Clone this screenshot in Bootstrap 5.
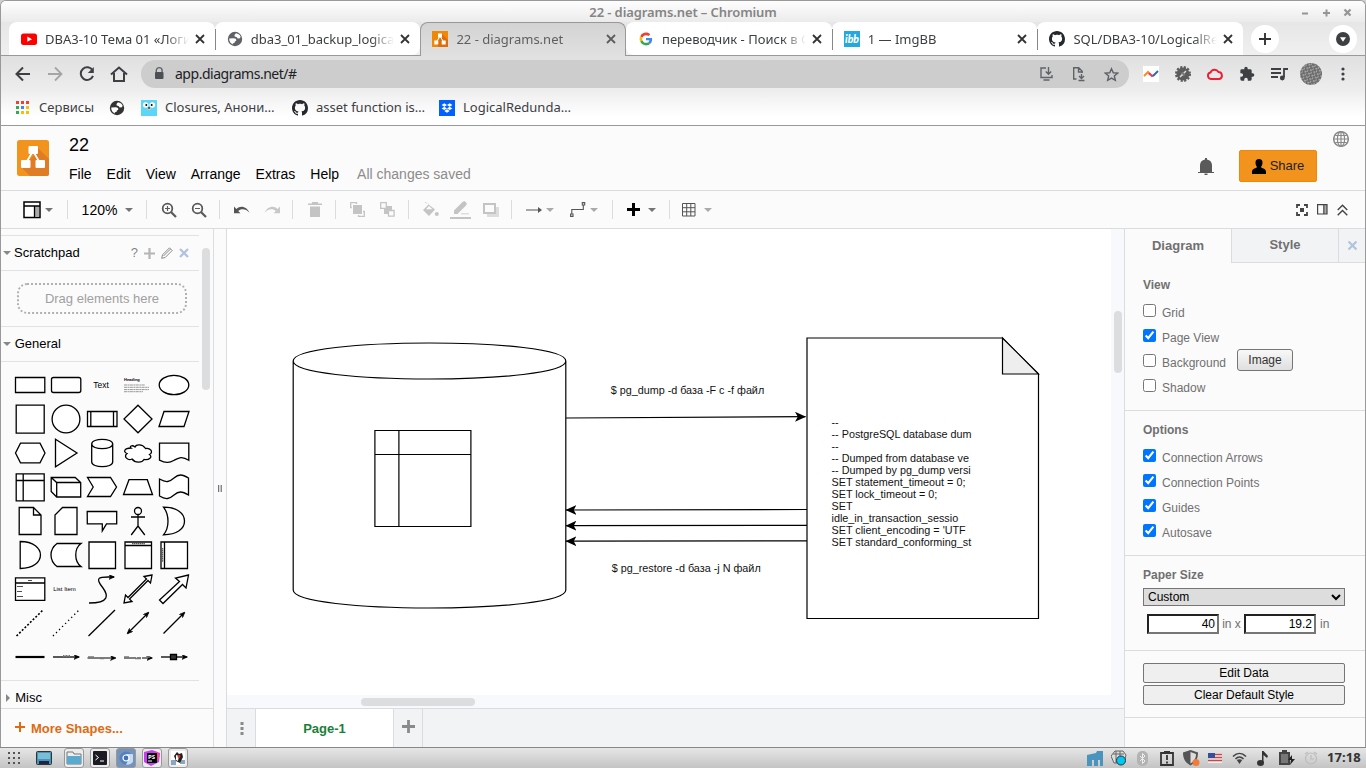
<!DOCTYPE html>
<html lang="ru">
<head>
<meta charset="utf-8">
<title>22 - diagrams.net</title>
<link rel="stylesheet" href="https://cdn.jsdelivr.net/npm/bootstrap@5.3.0/dist/css/bootstrap.min.css">
<style>
*{box-sizing:border-box}
body{width:1366px;height:768px;overflow:hidden;background:#cfcfcf;color:#000;font-family:"Liberation Sans",Arial,sans-serif;font-size:13px;line-height:1.2}
svg{display:block;flex:none}
.win{height:747px;border:1px solid #999;border-width:1px 1px 0;border-radius:6px 6px 0 0;overflow:hidden;background:#fbfbfb}
.ui{font-family:"Noto Sans","Open Sans",sans-serif;font-size:13px;color:#3c4043}
.titlebar{height:21px;background:linear-gradient(#fefefe,#ebebeb);color:#858585;font-weight:600;font-size:13px;padding-top:4px;letter-spacing:-.1px}
.winbtns{right:10px;top:5px;gap:5px}
.tabstrip{height:34px;background:linear-gradient(#e6e6e6,#f0f0f0);padding-left:8px;border-bottom:1px solid #999}
.btab{width:205.7px;height:33px;background:#fff;padding:1px 7px 0 12px;border-radius:8px 8px 0 0;position:relative}
.btab+.btab.sep::before{content:"";position:absolute;left:0;top:7px;height:21px;width:1px;background:#888}
.btab .ttl{flex:1 1 0;min-width:0;margin-left:8px;line-height:20px;-webkit-mask-image:linear-gradient(90deg,#000 82%,transparent 98%)}
.btab.on{height:34px;background:linear-gradient(#d3d3d3,#e0e0e0);border:1px solid #999;border-bottom:0;color:#5f5f5f;padding:0 6px 1px 11px}
.btab.bl{border-bottom-right-radius:8px}.btab.br{border-bottom-left-radius:8px}
.round{width:28px;height:28px;border-radius:50%;background:#fff;display:grid;place-items:center}
.navrow{height:36px;background:linear-gradient(#e0e0e0,#eeeeee)}
.nb{width:32px;display:grid;place-items:center}
.navl{padding-left:6px;margin-right:6px}
.exts{padding-left:6px}
.omni{width:988px;height:28px;border-radius:14px;background:#cdcdcd;font-size:14px;letter-spacing:-.48px;color:#202124;padding-right:2px}
.marks{height:34px;background:linear-gradient(#efefef,#fff 75%);border-bottom:1px solid #999;padding-left:14px;padding-bottom:2px}
.bm{gap:8px}
.bm1{width:94px}.bm2{width:32px}.bm3{width:151px}.bm4{width:147px}
.apphead{height:65px;border-bottom:1px solid #dadce0;padding-left:16px}
.applogo{margin-top:14px}
.headtxt{margin-left:20px;padding-top:9px}
.docname{font-size:18px;line-height:20px}
.menus{font-size:14px;line-height:16px;margin-top:11px}
.menus span{margin-right:15px}
.menus .saved{color:#8c8c8c;margin:0 0 0 3px}
.share{background:#f2931e;border:1px solid #f08705;border-radius:2px;width:78px;height:32px;font-size:13px;color:#222;margin-top:24px}
.bell{margin:32px 25px 0 0}.lang{margin:5px 16px 0 16px}
.tools{height:38px;border-bottom:1px solid #dadce0}
.tg{height:19px;border-right:1px solid #dadce0;display:flex;align-items:center;justify-content:center}
.g66{width:67px;padding-left:8px}.g78{width:79px;padding-left:1px}.g72{width:73px;padding-left:1px}.g42{width:43px;padding-left:2px}.g102{width:103px;padding-left:1px}.g100{width:101px}.g56{width:57px;padding-left:1px}.g52{width:53px;border:0}
.ic{width:30px;display:grid;place-items:center}
.caret{width:0;height:0;border:4.5px solid transparent;border-top-color:#747474;border-bottom:0}
.caret.lt{border-top-color:#aaa}
.toolr{gap:9px;padding-right:17px}
.work{height:518px}
.side{width:213px;border-right:1px solid #dadce0}
.sidein{width:198px;height:479px;padding-top:6px}
.sec{border-top:1px solid #e2e2e2;height:35px}
.tri{width:0;height:0;border:4.5px solid transparent;border-top-color:#888;border-bottom:0;margin:0 3px 0 2px}
.tri.shut{border:4.5px solid transparent;border-left-color:#888;border-right:0;margin:0 5px 0 4.5px}
.sicons{gap:6px;padding-right:10px}
.dragbox{border:2px dotted #b0b0b0;border-radius:10px;height:31px;width:170px;margin:12px 0 0 16px;color:#a0a0a0;text-align:center;line-height:27px}
.palette{width:181px;padding-top:6px;margin-left:10.5px;height:318px;font-size:0;align-content:flex-start}
.palette svg{fill:#fff;stroke:#000;stroke-width:1.3;width:36px;height:34px}
.more{height:39px;border-top:1px solid #dadce0;color:#e06a10;font-weight:700;padding:1px 0 0 14px}
.thumb{background:#dcdddf;border-radius:4px}
.sthumb{width:8px;height:142px;margin:19px 0 0 3px}
.vthumb{width:8px;height:62px;margin:82px 0 0 3px}
.hbar{height:13px;padding-top:3px}.hthumb{width:114px;height:8px;margin-left:134px}
.split{width:13px;border-right:1px solid #dadce0}
.mid{width:897px;background:#f8f9fc}
.canvas{background:#fff}
.pages{height:39px;background:#f1f3f4;border-top:1px solid #dadce0}
.pagetab{width:139px;background:#fff;border:solid #dadce0;border-width:0 1px;color:#188038;font-weight:700;padding-top:1px}
.pmenu{width:28px;padding:1px 0 0 1px}.padd{width:29px;border-right:1px solid #dadce0;padding-top:11px}
.panel{border-left:1px solid #dadce0;width:241px;font-size:12px;color:#707070}
.ptab{height:34px;font-size:13px;font-weight:700;display:grid;place-items:center}
.pt1{width:106px}.pt2{width:107px;padding-bottom:1px}
.off{background:#f1f3f4;border:1px solid #dadce0;border-width:0 0 1px 1px}
.blk{border-bottom:1px solid #dadce0;padding:12px 19px 0 18px}
.bk1{height:148px;padding-top:15px}.bk2{height:145px}.bk3{height:95px}.bk4{height:67px}
.blk h6{font-size:12px;font-weight:700;margin:0;line-height:14px}
.lst{padding-top:12px}
.opt{height:25px;line-height:14px}
.opt input{margin:0 6px 0 0;width:13px;height:13px}
.opt span{padding-top:2px}
.imgbtn{border:1px solid #767676;border-radius:3px;background:linear-gradient(#f8f8f8,#dfdfdf);width:56px;height:22px;margin:-5px 0 0 11px;padding:0;color:#333;line-height:19px}
.wide{width:202px;height:20px;border:1px solid #767676;border-radius:2px;background:#efefef;color:#000;padding:0;line-height:17px;display:block;margin-bottom:2px}
.paper{width:202px;height:18px;border:1px solid #767676;background:#ddd;font-size:12px;display:block;border-radius:0;color:#000;padding:0;margin:6px 0 8px}
.num{width:72px;height:20px;font-size:12px;text-align:right;border:2px inset #767676;padding:1px 2px;border-radius:0}
.inx{width:25px;text-align:center}
.taskbar{height:21px;background:linear-gradient(#e6e6e6,#c4c4c4);border-top:1px solid #888;color:#333}
.app{width:26px;height:20px;display:grid;place-items:center}
.app.first{width:28px}.app.second{width:32px}
.app.run{width:20px;margin:0 3px;border:1px solid #999;border-radius:3px;background:#ececec}
.app.cur{background:#7393bb}
.tray{width:24px;display:grid;place-items:center}
.clock{font-size:13px;font-weight:700;width:43px;letter-spacing:.1px}
</style>
</head>
<body>
<svg width="0" height="0" class="position-absolute">
<defs>
<symbol id="x" viewBox="0 0 16 16"><path d="M4 4l8 8M12 4l-8 8" stroke="#333" stroke-width="1.8"/></symbol>
<symbol id="gh" viewBox="0 0 16 16"><path fill="#24292e" d="M8 0C3.58 0 0 3.58 0 8c0 3.54 2.29 6.53 5.47 7.59.4.07.55-.17.55-.38 0-.19-.01-.82-.01-1.49-2.01.37-2.53-.49-2.69-.94-.09-.23-.48-.94-.82-1.13-.28-.15-.68-.52-.01-.53.63-.01 1.08.58 1.23.82.72 1.21 1.87.87 2.33.66.07-.52.28-.87.51-1.07-1.78-.2-3.64-.89-3.64-3.95 0-.87.31-1.59.82-2.15-.08-.2-.36-1.02.08-2.12 0 0 .67-.21 2.2.82.64-.18 1.32-.27 2-.27s1.36.09 2 .27c1.53-1.04 2.2-.82 2.2-.82.44 1.1.16 1.92.08 2.12.51.56.82 1.27.82 2.15 0 3.07-1.87 3.75-3.65 3.95.29.25.54.73.54 1.48 0 1.07-.01 1.93-.01 2.2 0 .21.15.46.55.38A8.01 8.01 0 0 0 16 8c0-4.42-3.58-8-8-8z"/></symbol>
<symbol id="globe" viewBox="0 0 16 16"><circle cx="8" cy="8" r="7.200" fill="currentColor"/><path fill="#fff" d="M2.200 7.500L7 7.200c1.300.3 2 .7 2.300 1.600.1 1-.5 1.500-1.500 1.600l-.3 1.600-1.700.2.1 1.300C3.600 12.600 2.100 10.300 2.200 7.500zM9 2.200c2 .3 3.800 1.500 4.600 3.300L13 7.300l-2.300.3L9.500 6 7.700 5.600 7.500 4z"/></symbol>
<symbol id="dio" viewBox="0 0 16 16"><path fill="#f08705" d="M0 0h16v16H0z"/><path fill="#df6c0c" d="M9 2l7 7v7H7l-4-4 5-4z"/><path d="M8 5L4.500 11M8 5l3.500 6" stroke="#fff"/><path fill="#fff" d="M6 2.500h4v4H6zM2.300 9.500h4v4h-4zM9.700 9.500h4v4h-4z"/></symbol>
<marker id="ar" viewBox="0 0 11 10" refX="10.500" refY="5" markerWidth="11" markerHeight="10" markerUnits="userSpaceOnUse" orient="auto-start-reverse"><path d="M0 0L11 5 0 10 2.800 5z" fill="#000"/></marker>
<marker id="sm" viewBox="0 0 11 10" refX="10" refY="5" markerWidth="6" markerHeight="5" markerUnits="userSpaceOnUse" orient="auto-start-reverse"><path d="M0 0L11 5 0 10 2.800 5z" fill="#000" stroke="#000"/></marker>
</defs>
</svg>
<div class="win">
  <!-- browser chrome -->
  <header class="ui">
    <div class="titlebar position-relative text-center">22 - diagrams.net – Chromium
      <div class="winbtns position-absolute d-flex"><svg width="16" height="14" stroke="#959595" stroke-width="2"><path d="M5 7.500h6"/></svg><svg width="16" height="14" stroke="#959595" stroke-width="2"><path d="M5 7h7M8.500 3.500v7"/></svg><svg width="16" height="14" stroke="#959595" stroke-width="2.200"><path d="M5.500 3.500l6 6M11.500 3.500l-6 6"/></svg></div>
    </div>
    <div class="tabstrip d-flex">
      <div class="btab d-flex align-items-center"><svg width="16" height="16"><rect y="2.500" width="16" height="11.500" rx="2.500" fill="#f00"/><path d="M6.300 5.500v5.300L11 8.200z" fill="#fff"/></svg><span class="ttl text-nowrap">DBA3-10 Тема 01 «Логи</span><svg width="16" height="16"><use href="#x"/></svg></div>
      <div class="btab sep bl d-flex align-items-center"><svg width="16" height="16" color="#5f6368"><use href="#globe"/></svg><span class="ttl text-nowrap">dba3_01_backup_logica</span><svg width="16" height="16"><use href="#x"/></svg></div>
      <div class="btab on d-flex align-items-center"><svg width="16" height="16"><use href="#dio"/></svg><span class="ttl text-nowrap">22 - diagrams.net</span><svg width="16" height="16" opacity=".75"><use href="#x"/></svg></div>
      <div class="btab br d-flex align-items-center"><svg width="16" height="16" viewBox="-6 -6 60 60"><path fill="#EA4335" d="M24 9.500c3.540 0 6.710 1.220 9.210 3.600l6.850-6.850C35.900 2.380 30.470 0 24 0 14.620 0 6.510 5.380 2.560 13.220l7.980 6.190C12.430 13.720 17.740 9.500 24 9.500z"/><path fill="#4285F4" d="M46.980 24.550c0-1.570-.15-3.090-.38-4.550H24v9.020h12.940c-.58 2.960-2.260 5.480-4.780 7.180l7.730 6c4.510-4.180 7.090-10.360 7.090-17.650z"/><path fill="#FBBC05" d="M10.530 28.590c-.48-1.450-.76-2.990-.76-4.590s.27-3.140.76-4.590l-7.980-6.190C.92 16.460 0 20.120 0 24c0 3.880.92 7.540 2.560 10.780l7.970-6.190z"/><path fill="#34A853" d="M24 48c6.480 0 11.930-2.130 15.890-5.810l-7.730-6c-2.150 1.450-4.920 2.300-8.160 2.300-6.260 0-11.570-4.220-13.470-9.910l-7.980 6.190C6.510 42.620 14.620 48 24 48z"/></svg><span class="ttl text-nowrap">переводчик - Поиск в G</span><svg width="16" height="16"><use href="#x"/></svg></div>
      <div class="btab sep d-flex align-items-center"><svg width="16" height="16"><rect width="16" height="16" fill="#23a8e0"/><text x="8" y="12" text-anchor="middle" font-family="Lato" font-size="10.500" font-weight="900" font-style="italic" fill="#fff" textLength="14">ibb</text></svg><span class="ttl text-nowrap">1 — ImgBB</span><svg width="16" height="16"><use href="#x"/></svg></div>
      <div class="btab sep d-flex align-items-center"><svg width="16" height="16"><use href="#gh"/></svg><span class="ttl text-nowrap">SQL/DBA3-10/LogicalRe</span><svg width="16" height="16"><use href="#x"/></svg></div>
      <div class="d-flex flex-grow-1 justify-content-between align-items-center ps-2 pe-2"><span class="round"><svg width="14" height="14" stroke="#333" stroke-width="1.900"><path d="M1 7h12M7 1v12"/></svg></span><span class="round"><svg width="14" height="14"><circle cx="7" cy="7" r="7" fill="#3c4043"/><path d="M4 5.300h6L7 9.700z" fill="#fff"/></svg></span></div>
    </div>
    <div class="navrow d-flex align-items-center">
      <div class="d-flex navl"><span class="nb"><svg width="16" height="16" fill="none" stroke="#3c4043" stroke-width="2"><path d="M15 8H2M8 1.500L1.500 8 8 14.500"/></svg></span><span class="nb"><svg width="16" height="16" fill="none" stroke="#a5a5a5" stroke-width="1.800"><path d="M1 8h13M8 1.500L14.500 8 8 14.500"/></svg></span><span class="nb"><svg width="16" height="16" fill="none" stroke="#3c4043" stroke-width="2"><path d="M13.600 4.500A6.300 6.300 0 1 0 14 9.800"/><path d="M14.800 1v6H8.800z" fill="#3c4043" stroke="none"/></svg></span><span class="nb"><svg width="18" height="16" fill="none" stroke="#3c4043" stroke-width="2"><path d="M1 8.500L9 1.500l8 7M4 7v8h10V7"/></svg></span></div>
      <div class="omni d-flex align-items-center"><svg width="34" height="28"><path d="M15.300 12.500v-2a2.900 2.900 0 0 1 5.800 0v2" fill="none" stroke="#5f6368" stroke-width="1.400"/><rect x="14" y="12" width="8.500" height="7" rx="1" fill="#4c5054"/></svg><span>app.diagrams.net/#</span>
        <div class="ms-auto d-flex"><span class="nb"><svg width="16" height="16" fill="none" stroke="#5f6368" stroke-width="1.400"><path d="M7 2H2v9.500h11V9M4.500 14h6M9.500 1v7M6.800 5.500l2.700 2.800 2.700-2.800"/></svg></span><span class="nb"><svg width="16" height="16" fill="none" stroke="#5f6368" stroke-width="1.400"><path d="M5.500 13H2.700V1.800h5l3.500 3.500V7M7.500 2v4h3.500M10.500 8v4M8 10l2.500 2.500L13 10M7.500 14.500h6"/></svg></span><span class="nb"><svg width="15" height="15" viewBox="0 0 16 16" fill="none" stroke="#5f6368" stroke-width="1.500"><path d="M8 1.800l1.900 4.300 4.700.4-3.600 3.100 1.100 4.600L8 11.800l-4.100 2.400L5 9.600 1.400 6.500l4.700-.4z"/></svg></span></div></div>
      <div class="d-flex exts"><span class="nb"><svg width="16" height="16" fill="none" stroke-width="1.900"><path fill="#fff" d="M0 0h16v16H0z"/><path stroke="#f68b1f" d="M1 10l4-4 2 3"/><path stroke="#e23a6e" d="M6 7l3 3 2-1"/><path stroke="#3665b8" d="M10 10l5-5"/></svg></span><span class="nb"><svg width="18" height="18" fill="none" stroke="#5c5c5c"><circle cx="9" cy="9" r="6.500" stroke-width="3" stroke-dasharray="2 1.400"/><circle cx="9" cy="9" r="4" stroke-width="5"/><circle cx="9" cy="9" r="2" fill="#777" stroke="none"/><path d="M6 12l2.500-2.500M10 8l2-2" stroke="#ddd" stroke-width="1.500"/></svg></span><span class="nb"><svg width="18" height="16" fill="none" stroke="#ee1c35" stroke-width="1.900"><path d="M5 13a3.300 3.300 0 0 1-.5-6.500A4.500 4.500 0 0 1 12.500 6a3.600 3.600 0 0 1 1 7z"/></svg></span><span class="nb"><svg width="16" height="16" viewBox="0 0 24 24" fill="#3c4043"><path d="M20.500 11H19V7a2 2 0 0 0-2-2h-4V3.500a2.500 2.500 0 0 0-5 0V5H4a2 2 0 0 0-2 2v3.800h1.500a2.700 2.700 0 0 1 0 5.400H2V20a2 2 0 0 0 2 2h3.800v-1.500a2.700 2.700 0 0 1 5.400 0V22H17a2 2 0 0 0 2-2v-4h1.500a2.500 2.500 0 0 0 0-5z"/></svg></span><span class="nb"><svg width="17" height="14" fill="none" stroke="#3c4043" stroke-width="1.800"><path d="M0 2h10M0 6h10M0 10h7M13 10.500V2h4"/><circle cx="11.300" cy="11" r="2.400" fill="#3c4043" stroke="none"/></svg></span><span class="nb"><svg width="22" height="22"><defs><pattern id="weave" width="4" height="4" patternUnits="userSpaceOnUse" patternTransform="rotate(30)"><path fill="#6c6c6c" d="M0 0h4v4H0z"/><path fill="#aaa" d="M0 0h2v1.500H0zM2 2h1v2H2z"/></pattern></defs><circle cx="11" cy="11" r="11" fill="url(#weave)"/></svg></span><span class="nb"><svg width="4" height="14" fill="#3c4043"><circle cx="2" cy="2" r="1.600"/><circle cx="2" cy="7" r="1.600"/><circle cx="2" cy="12" r="1.600"/></svg></span></div>
    </div>
    <div class="marks d-flex align-items-center">
      <div class="bm bm1 d-flex align-items-center"><svg width="16" height="16"><path fill="#ea4335" d="M1 1h3v3H1zM6 1h3v3H6zM11 1h3v3h-3z"/><path fill="#34a853" d="M1 6h3v3H1zM1 11h3v3H1z"/><path fill="#4285f4" d="M6 6h3v3H6z"/><path fill="#fbbc04" d="M11 6h3v3h-3zM6 11h3v3H6zM11 11h3v3h-3z"/></svg><span>Сервисы</span></div>
      <div class="bm bm2"><svg width="16" height="16" color="#333"><use href="#globe"/></svg></div>
      <div class="bm bm3 d-flex align-items-center"><svg width="16" height="16"><path fill="#5dd5f7" d="M0 0h16v16H0z"/><circle cx="4.700" cy="5" r="2.800" fill="#fff"/><circle cx="11.300" cy="5" r="2.800" fill="#fff"/><circle cx="5.300" cy="5" r="1"/><circle cx="10.700" cy="5" r="1"/><path d="M6.500 8h3v2h-3z" fill="#e8c79a"/><path d="M7 7.500h2v1H7z"/></svg><span class="text-nowrap">Closures, Анони…</span></div>
      <div class="bm bm4 d-flex align-items-center"><svg width="16" height="16"><use href="#gh"/></svg><span class="text-nowrap">asset function is…</span></div>
      <div class="bm d-flex align-items-center"><svg width="16" height="16"><path fill="#0061ff" d="M0 0h16v16H0z"/><path fill="#fff" d="M5.300 3.300L8 5 5.300 6.700 2.600 5zM10.700 3.300L13.400 5l-2.700 1.700L8 5zM5.300 6.700L8 8.400l-2.700 1.700-2.700-1.700zM10.700 6.700l2.700 1.700-2.700 1.700L8 8.400zM8 9.300l2.700 1.700L8 12.700 5.300 11z"/></svg><span>LogicalRedunda…</span></div>
    </div>
  </header>
  <!-- editor header -->
  <div class="apphead d-flex">
    <svg width="32" height="36" class="applogo"><rect width="32" height="36" rx="2.500" fill="#f2931e"/><path fill="#e07c24" d="M20 7l12 12v14.500a2.500 2.500 0 0 1-2.500 2.500H13l-8-8 11-12z"/><path d="M16 11L9 23M16 11l7 12" stroke="#fff" stroke-width="1.800"/><rect x="11.500" y="6" width="9.500" height="8" rx="1" fill="#fff"/><rect x="4" y="20" width="9.500" height="8" rx="1" fill="#fff"/><rect x="18.500" y="20" width="9.500" height="8" rx="1" fill="#fff"/></svg>
    <div class="headtxt">
      <div class="docname">22</div>
      <nav class="menus d-flex"><span>File</span><span>Edit</span><span>View</span><span>Arrange</span><span>Extras</span><span>Help</span><span class="saved">All changes saved</span></nav>
    </div>
    <div class="ms-auto d-flex">
      <svg width="16" height="17" fill="#5a5a5a" class="bell"><path d="M2 14V7a6 6 0 0 1 5-5.500V0h2v1.500A6 6 0 0 1 14 7v7h2v1H0v-1zM6.500 15.500h3V17h-3z"/></svg>
      <button class="btn share p-0 d-flex align-items-center justify-content-center"><svg width="14" height="15" class="me-1"><path d="M7 0a3.600 3.600 0 0 1 3.500 3.700C10.500 6 9.500 7 9 8c.2 1.300 5 1.400 5 4.500V15H0v-2.500C0 9.400 4.800 9.300 5 8c-.5-1-1.500-2-1.500-4.300A3.600 3.600 0 0 1 7 0z"/></svg><span>Share</span></button>
      <svg width="16" height="16" fill="none" stroke="#8a8a8a" stroke-width="1.200" class="lang"><circle cx="8" cy="8" r="7.300" stroke-width="1.500"/><ellipse cx="8" cy="8" rx="3.600" ry="7.300"/><path d="M8 1v14M1 8h14M2.200 4.500h11.600M2.200 11.500h11.600"/></svg>
    </div>
  </div>
  <div class="tools d-flex align-items-center">
    <div class="tg g66"><svg width="18" height="18"><path d="M1 1h16v15.500H1z" fill="#fff" stroke="#000" stroke-width="1.500"/><path d="M12 5h4v11h-4z" fill="#aaa"/><path d="M1 5h16M11.500 5v11" stroke="#000" stroke-width="1.300"/></svg><i class="caret ms-1"></i></div>
    <div class="tg g78"><span class="menus mt-0">120%</span><i class="caret ms-2"></i></div>
    <div class="tg g72"><span class="ic"><svg width="16" height="16" fill="none" stroke="#5a5a5a" stroke-width="1.800"><circle cx="6.500" cy="6.500" r="4.800"/><path d="M10 10l5 5" stroke-width="2.200"/><path d="M4 6.500h5M6.500 4v5" stroke-width="1.200"/></svg></span><span class="ic"><svg width="16" height="16" fill="none" stroke="#5a5a5a" stroke-width="1.800"><circle cx="6.500" cy="6.500" r="4.800"/><path d="M10 10l5 5" stroke-width="2.200"/><path d="M4 6.500h5" stroke-width="1.200"/></svg></span></div>
    <div class="tg g72"><span class="ic"><svg width="16" height="10"><path fill="#555" d="M0 1.500v6.800h6.500L4.200 6C7 3.300 12 3.500 15.500 7.800 13 1.500 6.500-.2 2.400 4z"/></svg></span><span class="ic"><svg width="16" height="10"><path fill="#c8c8c8" transform="matrix(-1 0 0 1 16 0)" d="M0 1.500v6.800h6.500L4.200 6C7 3.300 12 3.500 15.500 7.800 13 1.500 6.500-.2 2.400 4z"/></svg></span></div>
    <div class="tg g42"><svg width="14" height="15" fill="#c4c4c4"><path d="M0 1.500h4V0h6v1.500h4V3H0zM2 4.500h10V15H2z"/></svg></div>
    <div class="tg g72"><span class="ic"><svg width="15" height="15" fill="none" stroke="#c4c4c4" stroke-width="1.300"><path d="M3 3h9v9H3z" fill="#c4c4c4" stroke="none"/><path d="M1.800 5.500H.7V.7h5.800v1.200M13 9.500h1.300v4.800H8.500V13"/></svg></span><span class="ic"><svg width="15" height="15" fill="none" stroke="#c4c4c4" stroke-width="1.300"><path d="M4 4h8v8H4z" fill="#c4c4c4" stroke="none"/><path d="M.7.7h5.600v5.600H.7zM8.500 8.500h5.600v5.600H8.500z" fill="#fbfbfb"/></svg></span></div>
    <div class="tg g102"><span class="ic"><svg width="17" height="15" fill="#c4c4c4"><path d="M1 8l6-6L2.500.5 3.500 0 13 7.500 7 14z"/><path d="M4 7.300L7 4l3.500 3.300z" fill="#fbfbfb"/><circle cx="14.800" cy="12" r="2"/></svg></span><span class="ic"><svg width="21" height="18" fill="#c4c4c4"><path d="M4 13v-3.500L12.500 1l2-1L17 2.500l-1 2L7.500 13zM0 16h21v2H0zM11 12.500h8v.8H11z"/></svg></span><span class="ic"><svg width="16" height="14"><path d="M4 4h12v10H4z" fill="#ddd"/><path d="M1 1h11v9H1z" fill="#fbfbfb" stroke="#c4c4c4" stroke-width="2"/></svg></span></div>
    <div class="tg g100"><svg width="16" height="8"><path d="M0 4h13" stroke="#555" stroke-width="1.200"/><path d="M12 1l4 3-4 3z" fill="#555"/></svg><i class="caret lt ms-1 me-3"></i><svg width="16" height="15" fill="none" stroke="#555" stroke-width="1.100"><path d="M1.800 12V7.500h11.500V3M.6 12h2.400v2.400H.6zM12.300.6h2.400V3h-2.400z"/></svg><i class="caret lt ms-1"></i></div>
    <div class="tg g56"><svg width="13" height="13"><path d="M0 6.500h13M6.500 0v13" stroke="#000" stroke-width="3"/></svg><i class="caret ms-2"></i></div>
    <div class="tg g52"><svg width="14" height="14" fill="none" stroke="#555"><path d="M.5.500h12.500v12.500H.5zM.5 4.700H13M.5 8.800H13M4.700.5V13M8.800.5V13"/></svg><i class="caret lt ms-2"></i></div>
    <div class="ms-auto d-flex align-items-center toolr"><svg width="12" height="12" fill="none" stroke="#444" stroke-width="1.800"><path d="M1 4V1h3M8 1h3v3M11 8v3H8M4 11H1V8"/><path d="M4 4h4v4H4z" fill="#444" stroke="none"/></svg><svg width="11" height="11"><path d="M7 1h3v9H7z" fill="#aaa"/><path d="M.6.6h9.400v9.400H.6zM6.800 1v9" fill="none" stroke="#444" stroke-width="1.200"/></svg><svg width="11" height="12" fill="none" stroke="#444" stroke-width="1.400"><path d="M.7 6L5.500 1.200 10.300 6M.7 11.200L5.500 6.400l4.800 4.800"/></svg></div>
  </div>
  <div class="work d-flex">
    <aside class="side">
      <div class="d-flex">
      <div class="sidein">
        <div class="sec d-flex align-items-center"><i class="tri"></i><span class="ms-0 ps-0 lbl">Scratchpad</span><span class="ms-auto d-flex align-items-center sicons"><span class="text-black-50">?</span><svg width="11" height="11"><path d="M0 5.500h11M5.500 0v11" stroke="#b5b5b5" stroke-width="2.200"/></svg><svg width="12" height="12" fill="none" stroke="#8a8a8a"><path d="M.7 11.300l.8-3.500L8.500.8l2.700 2.700-7 7zM2.500 9L9.500 2"/></svg><svg width="10" height="10" stroke="#b0c4de" stroke-width="2.300"><path d="M1 1l8 8M9 1L1 9"/></svg></span></div>
        <div class="sec secdrag"><div class="dragbox">Drag elements here</div></div>
        <div class="sec d-flex align-items-center"><i class="tri"></i><span class="lbl">General</span></div>
        <div class="sec secpal">
        <div class="palette d-flex flex-wrap">
<svg viewBox="-18 -17 36 34"><path d="M-14.500-7.500h29.300v15h-29.300z"/></svg>
<svg viewBox="-18 -17 36 34"><rect x="-14.500" y="-7.500" width="29.300" height="15" rx="2"/></svg>
<svg viewBox="-18 -17 36 34"><text x="-1" y="3" text-anchor="middle" font-size="8.500" fill="#000" stroke="none">Text</text></svg>
<svg viewBox="-18 -17 36 34"><text x="-14" y="-4" font-size="4" font-weight="700" fill="#000" stroke="none">Heading</text><path d="M-14 0h21M-14 2.300h25M-14 4.600h25M-14 6.700h19" stroke="#555" stroke-width=".6" stroke-dasharray="3 .5 2 .4"/></svg>
<svg viewBox="-18 -17 36 34"><ellipse rx="14.800" ry="9.700"/></svg>
<svg viewBox="-18 -17 36 34"><path d="M-13.800-13.800h28v28h-28z"/></svg>
<svg viewBox="-18 -17 36 34"><circle r="13.900"/></svg>
<svg viewBox="-18 -17 36 34"><path d="M-14.500-7.500h29.500v15h-29.500zM-11.200-7.500v15M11.500-7.500v15"/></svg>
<svg viewBox="-18 -17 36 34"><path d="M0-13.800L14 0 0 13.800-14 0z"/></svg>
<svg viewBox="-18 -17 36 34"><path d="M-10-7.500h25l-5 15h-25z"/></svg>
<svg viewBox="-18 -17 36 34"><path d="M-9.500-9.800h19.500l5 9.800-5 9.800h-19.500L-14.500 0z"/></svg>
<svg viewBox="-18 -17 36 34"><path d="M-10.500-13.800L11 0-10.500 13.800z"/></svg>
<svg viewBox="-18 -17 36 34"><path d="M-10.300-9c0-6.200 21-6.200 21 0V9c0 6.200-21 6.200-21 0zM-10.300-9c0 6.200 21 6.200 21 0"/></svg>
<svg viewBox="-18 -17 36 34"><path d="M-7-5c-7 0-8 4-4 5.500-4 3 1 7.500 5 5.500C-3 10 4 10 6 6.500c5 1 9-2.500 5.500-5C16-1 12-5.500 7.500-4.500 4-9.500-2-8.500-3-6-6-8.500-9-6.500-7-5z"/></svg>
<svg viewBox="-18 -17 36 34"><path d="M-14.500-9.800h29.300v17c-7-4.500-10-2.500-14.600 0s-8 3.500-14.700 0z"/></svg>
<svg viewBox="-18 -17 36 34"><path d="M-13.800-13.200h28v27h-28zM-6.800-13.200v27M-13.800-6.500h28"/></svg>
<svg viewBox="-18 -17 36 34"><path d="M-14.800-9.500h24l5.500 5V10h-24l-5.500-5.500zM-14.800-9.500l5.500 5H14.700M-9.300-4.500V10"/></svg>
<svg viewBox="-18 -17 36 34"><path d="M-14.500-9.500h23L14.500 0l-6 9.500h-23L-8.800 0z"/></svg>
<svg viewBox="-18 -17 36 34"><path d="M-9-7.300H9.300L14.500 7.500h-29z"/></svg>
<svg viewBox="-18 -17 36 34"><path d="M-14.500-8c7 4 10 3 14.500-1s8-4 14.500 0V8c-6.500-4-10-4-14.500 0s-8 5-14.500 1z"/></svg>
<svg viewBox="-18 -17 36 34"><path d="M-10.800-13.500H3.500L11-6v19.500h-21.800zM3.500-13.500V-6H11"/></svg>
<svg viewBox="-18 -17 36 34"><path d="M-3.500-13.500H11v27h-22V-6z"/></svg>
<svg viewBox="-18 -17 36 34"><path d="M-14.800-9.500h29.500V2.800H4.500L.3 9.800V2.800h-15z"/></svg>
<svg viewBox="-18 -17 36 34"><circle cy="-10" r="3.500"/><path d="M0-6.500V5M-7-4H7M0 5l-6.800 9M0 5l6.800 9" fill="none"/></svg>
<svg viewBox="-18 -17 36 34"><path d="M-10.500-13.800c13.500 0 21 6 21 13.800s-7.500 13.800-21 13.800c6-7 6-20 0-27.600z"/></svg>
<svg viewBox="-18 -17 36 34"><path d="M-9.800-13.500c27 0 27 27 0 27z"/></svg>
<svg viewBox="-18 -17 36 34"><path d="M-9-11.500h24c-7 5-7 18 0 23H-9c-8-6-8-17 0-23z"/></svg>
<svg viewBox="-18 -17 36 34"><path d="M-13-13h26.500v26.500H-13z"/></svg>
<svg viewBox="-18 -17 36 34"><path d="M-13-13h26.500v26.500H-13zM-13-9.500h26.500"/><path d="M-6-11.300H7" stroke-width=".8" stroke-dasharray="1.500 .4"/></svg>
<svg viewBox="-18 -17 36 34"><path d="M-13-13h26.500v26.500H-13zM-9.500-13v26.500"/><path d="M-11.300-7V7" stroke-width=".8" stroke-dasharray="1.500 .4"/></svg>
<svg viewBox="-18 -17 36 34"><path d="M-14.500-11.200h29.300v22.500h-29.300zM-14.500-6h29.300"/><path d="M-2-8.500h4M-13-2.500h6M-13 2.500h5M-13 7.500h6" stroke-width=".7"/></svg>
<svg viewBox="-18 -17 36 34"><text x="-1.500" y="2" text-anchor="middle" font-size="6" fill="#000" stroke="none">List Item</text></svg>
<svg viewBox="-18 -17 36 34"><path d="M-13 14C8 14 6 6 1-1-8-12-2-12 6-12h6" fill="none" marker-end="url(#sm)"/></svg>
<svg viewBox="-18 -17 36 34"><path d="M14-14L6-12.500 8.500-10-10 8.500-12.500 6-14 14-6 12.500-8.500 10 10-8.500 12.500-6z"/></svg>
<svg viewBox="-18 -17 36 34"><path d="M14.500-14L1.500-11 5.500-7.500-14.500 11-11 14.500 8.500-4.500 12-1z"/></svg>
<svg viewBox="-18 -17 36 34"><path d="M-13.500 13L13-13" stroke-dasharray="2 1.800" stroke-width="1.600"/></svg>
<svg viewBox="-18 -17 36 34"><path d="M-13 13L13-13" stroke-dasharray="1.300 3"/></svg>
<svg viewBox="-18 -17 36 34"><path d="M-13.500 13L13-13"/></svg>
<svg viewBox="-18 -17 36 34"><path d="M-10.500 10.500L10.500-10.500" marker-end="url(#sm)" marker-start="url(#sm)"/></svg>
<svg viewBox="-18 -17 36 34"><path d="M-10.500 10.500L10.500-10.500" marker-end="url(#sm)"/></svg>
<svg viewBox="-18 -17 36 34"><path d="M-14.500 0h29" stroke-width="2.200"/></svg>
<svg viewBox="-18 -17 36 34"><path d="M-13 0h26" marker-end="url(#sm)"/><path d="M-3-1h7" stroke="#777" stroke-dasharray="1 .5" stroke-width="2"/></svg>
<svg viewBox="-18 -17 36 34"><path d="M-14.500 1h28" marker-end="url(#sm)" stroke-width="1"/><path d="M-14 0h6M-2 1.500h4" stroke="#777" stroke-width="1.500"/></svg>
<svg viewBox="-18 -17 36 34"><path d="M-14 1h28" marker-end="url(#sm)" stroke-width="1" stroke-dasharray="12 1 4 1 30"/><path d="M-14 0h5M-3 1.500h6M8 0h4" stroke="#777" stroke-width="1.500"/></svg>
<svg viewBox="-18 -17 36 34"><path d="M-13 0h26" marker-end="url(#sm)"/><path d="M-3.500-2.500h6v5h-6z" fill="#333"/></svg>
        </div></div>
        <div class="sec secmisc d-flex align-items-center"><i class="tri shut"></i><span class="lbl">Misc</span></div>
      </div>
      <div class="thumb sthumb"></div>
      </div>
      <div class="more d-flex align-items-center"><svg width="10" height="10" class="mb-1"><path d="M0 5h10M5 0v10" stroke="#e06a10" stroke-width="2"/></svg><span class="morelbl">More Shapes...</span></div>
    </aside>
    <div class="split d-grid align-items-center justify-content-center"><svg width="4" height="7"><path d="M.7 0v7M3.200 0v7" stroke="#555"/></svg></div>
    <main class="mid">
      <div class="d-flex">
      <svg class="canvas" width="884" height="466" viewBox="227 229 884 466" fill="#fff" stroke="#000" stroke-width="1.200">
        <path d="M293.200 361c0-24 272.600-24 272.600 0v229c0 24-272.600 24-272.600 0zM293.200 361c0 24 272.600 24 272.600 0"/>
        <path d="M374.900 430.500h96v96h-96zM398.900 430.500v96M374.900 454.500h96"/>
        <path d="M807 338h195.500l36 36v244.500H807z"/><path d="M1002.500 338v36h36z" fill="#eee"/>
        <g fill="none"><path d="M566 418l239.500-1.300" marker-end="url(#ar)"/><path d="M807 509.500l-241 .5" marker-end="url(#ar)"/><path d="M807 525.300l-241 .4" marker-end="url(#ar)"/><path d="M807 540.800l-241 .4" marker-end="url(#ar)"/></g>
        <g fill="#111" stroke="none" font-size="10.800">
        <text x="610.700" y="394" textLength="153.500">$ pg_dump -d база -F c -f файл</text>
        <text x="611.700" y="572" textLength="149">$ pg_restore -d база -j N файл</text>
        <text x="831.500" y="426">--</text><text x="831.500" y="438">-- PostgreSQL database dum</text><text x="831.500" y="450">--</text><text x="831.500" y="462">-- Dumped from database ve</text><text x="831.500" y="474">-- Dumped by pg_dump versi</text><text x="831.500" y="486">SET statement_timeout = 0;</text><text x="831.500" y="498">SET lock_timeout = 0;</text><text x="831.500" y="510">SET</text><text x="831.500" y="522">idle_in_transaction_sessio</text><text x="831.500" y="534">SET client_encoding = 'UTF</text><text x="831.500" y="546">SET standard_conforming_st</text>
        </g>
      </svg>
      <div class="thumb vthumb"></div>
      </div>
      <div class="hbar"><div class="thumb hthumb"></div></div>
      <div class="pages d-flex">
        <div class="pmenu d-grid align-items-center justify-content-center"><svg width="4" height="14" fill="#8a8a8a"><path d="M.5 0h3v3h-3zM.5 5h3v3h-3zM.5 10h3v3h-3z"/></svg></div>
        <div class="pagetab d-grid align-items-center justify-content-center">Page-1</div>
        <div class="padd d-grid justify-content-center"><svg width="13" height="13"><path d="M0 6.500h13M6.500 0v13" stroke="#8a8a8a" stroke-width="2.800"/></svg></div>
      </div>
    </main>
    <aside class="panel">
      <div class="d-flex"><div class="ptab pt1">Diagram</div><div class="ptab off pt2">Style</div><div class="ptab off flex-grow-1"><svg width="9" height="9" stroke="#b0c4de" stroke-width="2.200"><path d="M.5.500l8 8M8.500.5l-8 8"/></svg></div></div>
      <section class="blk bk1"><h6>View</h6>
        <div class="lst"><label class="opt d-flex align-items-start"><input type="checkbox"><span>Grid</span></label><label class="opt d-flex align-items-start"><input type="checkbox" checked><span>Page View</span></label><label class="opt d-flex align-items-start"><input type="checkbox"><span>Background</span><button class="imgbtn">Image</button></label><label class="opt d-flex align-items-start"><input type="checkbox"><span>Shadow</span></label></div></section>
      <section class="blk bk2"><h6>Options</h6>
        <div class="lst"><label class="opt d-flex align-items-start"><input type="checkbox" checked><span>Connection Arrows</span></label><label class="opt d-flex align-items-start"><input type="checkbox" checked><span>Connection Points</span></label><label class="opt d-flex align-items-start"><input type="checkbox" checked><span>Guides</span></label><label class="opt d-flex align-items-start"><input type="checkbox" checked><span>Autosave</span></label></div></section>
      <section class="blk bk3"><h6>Paper Size</h6>
        <select class="paper"><option>Custom</option></select>
        <div class="d-flex align-items-center ps-1"><input class="num" value="40"><span class="inx">in x</span><input class="num" value="19.2"><span class="ps-1">in</span></div></section>
      <section class="blk bk4"><button class="wide">Edit Data</button><button class="wide">Clear Default Style</button></section>
    </aside>
  </div>
</div>
<footer class="taskbar ui d-flex align-items-center">
  <span class="app first"><svg width="14" height="14" fill="#555"><path d="M1 1h2v2H1zM6 1h2v2H6zM11 1h2v2h-2zM1 6h2v2H1zM6 6h2v2H6zM11 6h2v2h-2zM1 11h2v2H1zM6 11h2v2H6zM11 11h2v2h-2z"/></svg></span>
  <span class="app second"><svg width="16" height="14"><rect x=".5" y=".5" width="15" height="13" rx="1" fill="#4496b8" stroke="#333"/><path d="M2 2h12v6H2z" fill="#7bbcd6"/><path d="M3 10h10v3H3z" fill="#224"/></svg></span>
  <span class="app run ms-1"><svg width="16" height="14"><path d="M1 1h6l1 2h7v10H1z" fill="#eee" stroke="#777"/><path d="M1 5h14v8H1z" fill="#5aa9cf"/></svg></span>
  <span class="app run"><svg width="14" height="14"><rect width="14" height="14" rx="1" fill="#1b1b24"/><path d="M2.500 4l3 2.500-3 2.500M7 10h4" fill="none" stroke="#fff"/></svg></span>
  <span class="app run cur"><svg width="14" height="14"><circle cx="7" cy="7" r="6.500" fill="#5582bd"/><path d="M7 3h6.500A6.500 6.500 0 0 1 7 13.500L10 8z" fill="#c6daf3"/><circle cx="7" cy="7" r="3" fill="#3f73b8" stroke="#fff" stroke-width="1.200"/></svg></span>
  <span class="app run"><svg width="16" height="16"><path d="M0 2L8 0l8 3-1 9-8 4-7-4z" fill="#c63ef0"/><path d="M11 1l5 3-2 7z" fill="#f546a0"/><path d="M3 3h10v10H3z"/><text x="4" y="9" font-size="6" font-weight="700" fill="#fff">PS</text><path d="M4 11h4" stroke="#fff"/></svg></span>
  <span class="app run"><svg width="16" height="16"><rect x="1" y="1" width="14" height="14" fill="#fff"/><path d="M1 10h5v5H1zM10 10h5v4h-5z" fill="#8aa7c0"/><path d="M4 6l3-4 2 2 3-1 1 4-3 6-4-2z" fill="#222"/><path d="M6 5l3 1-1 5-2-1z" fill="#fff"/><circle cx="9" cy="6.500" r="1.400" fill="#e03020"/></svg></span>
  <div class="ms-auto d-flex align-items-center">
  <span class="tray"><svg width="16" height="16" fill="#4a94bd"><path d="M0 5l9-2 1-2 6 0v15h-3v-6h-2v6H7v-6H5v6H0z"/></svg></span>
  <span class="tray"><svg width="16" height="16"><path d="M4 1h8l3 4-2 8H3L0 6z" fill="#ddd" stroke="#666"/><path d="M2 4h11M5 1v12M9 1v5" stroke="#666"/><circle cx="10" cy="10.500" r="4.500" fill="#00c8f5" stroke="#333"/></svg></span>
  <span class="tray"><svg width="12" height="15"><rect width="11" height="15" rx="5" fill="#b3b3b3"/><path d="M3 5l5 5-2.500 2.500v-10L8 5l-5 5" fill="none" stroke="#eee"/></svg></span>
  <span class="tray"><svg width="14" height="16" fill="none" stroke="#333" stroke-width="1.800"><path d="M1 3h12v12H1zM4 2h6M7 5v5M7 11.500v2"/></svg></span>
  <span class="tray"><svg width="17" height="16"><path d="M7.500 0L15 2.500c0 6-2 10-7.500 13C2 12.500 0 8.500 0 2.500z" fill="#555"/><path d="M7.500 2l5.500 2c0 4-1.500 7-5.500 9.500z" fill="#ddd"/><circle cx="13" cy="12.500" r="3.500" fill="#f47a38"/></svg></span>
  <span class="tray"><svg width="14" height="10"><path fill="#eee" d="M0 0h14v10H0z"/><path d="M0 1.500h14M0 4.500h14M0 7.500h14" stroke="#c74848" stroke-width="1.500"/><path fill="#34509a" d="M0 0h7v5H0z"/></svg></span>
  <span class="tray"><svg width="15" height="12" fill="none" stroke="#444" stroke-width="1.600"><path d="M1 4.500C5 .5 10 .5 14 4.500M3.500 7C6 4.500 9 4.500 11.500 7"/><path d="M4.800 8L7.500 12l2.700-4c-1.500-1-4-1-5.400 0z" fill="#444" stroke="none"/></svg></span>
  <span class="tray"><svg width="12" height="15" fill="#333"><ellipse cx="3.500" cy="12" rx="3.500" ry="3"/><path d="M5 0h1.500l4.500 5-1 2-3.500-3v8H5z"/></svg></span>
  <span class="tray"><svg width="16" height="16"><path d="M3 0h5v2h3v13H0V2h3z" fill="#444"/><path d="M2 4h7v9H2z" fill="#777"/><path d="M13 5l-4 5h3l-1 5 5-6h-3z" fill="#222"/></svg></span>
  <span class="tray"><svg width="14" height="14" fill="none" stroke="#bcbcbc" stroke-width="1.200"><circle cx="7" cy="7.500" r="5.500"/><path d="M7 4v4h3M1 3l3-2M13 3l-3-2"/></svg></span>
  <span class="clock ps-1">17:18</span></div>
</footer>
<style>
.secdrag{height:56px}.secpal{height:319px}.secmisc{height:28px;padding-top:6px}
.lbl{margin-left:.7px}.morelbl{margin-left:6px}
</style>
<script src="https://cdn.jsdelivr.net/npm/bootstrap@5.3.0/dist/js/bootstrap.bundle.min.js"></script>
</body>
</html>
